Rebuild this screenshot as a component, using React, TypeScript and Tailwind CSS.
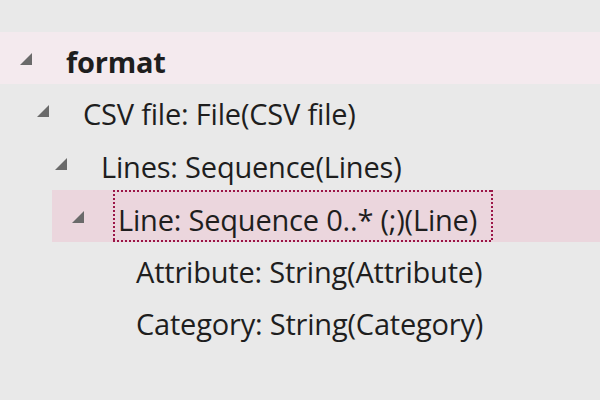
import React from "react";

type Node = {
  label: string;
  depth: number;
  expandable: boolean;
  bold?: boolean;
  hover?: boolean;
  selected?: boolean;
  h: string;
};

const nodes: Node[] = [
  { label: "format", depth: 0, expandable: true, bold: true, hover: true, h: "h-[52px]" },
  { label: "CSV file: File(CSV file)", depth: 1, expandable: true, h: "h-[53px]" },
  { label: "Lines: Sequence(Lines)", depth: 2, expandable: true, h: "h-[53px]" },
  { label: "Line: Sequence 0..* (;)(Line)", depth: 3, expandable: true, selected: true, h: "h-[52px]" },
  { label: "Attribute: String(Attribute)", depth: 4, expandable: false, h: "h-[52px]" },
  { label: "Category: String(Category)", depth: 4, expandable: false, h: "h-[52px]" },
];

const indents = ["ml-0", "ml-[17px]", "ml-[35px]", "ml-[52px]", "ml-[70px]"];

// retangulo de foco pontilhado (pontos quadrados de 2px)
const focusRect =
  "[background-image:linear-gradient(to_right,#9b1547_50%,transparent_50%),linear-gradient(to_right,#9b1547_50%,transparent_50%),linear-gradient(to_bottom,#9b1547_50%,transparent_50%),linear-gradient(to_bottom,#9b1547_50%,transparent_50%)] [background-size:4px_2px,4px_2px,2px_4px,2px_4px] [background-position:0_0,0_100%,0_0,100%_0] [background-repeat:repeat-x,repeat-x,repeat-y,repeat-y]";

// triangulo de "expandido" no estilo do Visual Studio
function Expanded() {
  return (
    <svg width="12" height="12" viewBox="0 0 12 12" className="block">
      <polygon points="12,0 12,12 0,12" fill="#6a6a6a" />
    </svg>
  );
}

export default function App() {
  return (
    <div
      className="h-[400px] w-[600px] overflow-hidden bg-[#e9e9e9] pt-8 text-[#1e1e1e]"
      style={{ fontFamily: '"Open Sans", "Noto Sans", sans-serif' }}
    >
      {nodes.map((n) => (
        <div
          key={n.label}
          className={`flex items-center pl-5 ${n.h} ${indents[n.depth]} ${
            n.hover ? "bg-[#f4eaee]" : n.selected ? "bg-[#ebd6dd]" : ""
          }`}
        >
          <div className="flex w-[46px] shrink-0 items-center pt-[1px]">
            {n.expandable && <Expanded />}
          </div>
          <div
            className={`-ml-[5px] flex h-full items-center pb-[2px] pl-[5px] pr-[16px] pt-[8px] text-[29px] leading-none tracking-[-0.2px] whitespace-nowrap ${
              n.selected ? focusRect : ""
            } ${n.bold ? "font-bold" : ""}`}
          >
            {n.label}
          </div>
        </div>
      ))}
    </div>
  );
}
